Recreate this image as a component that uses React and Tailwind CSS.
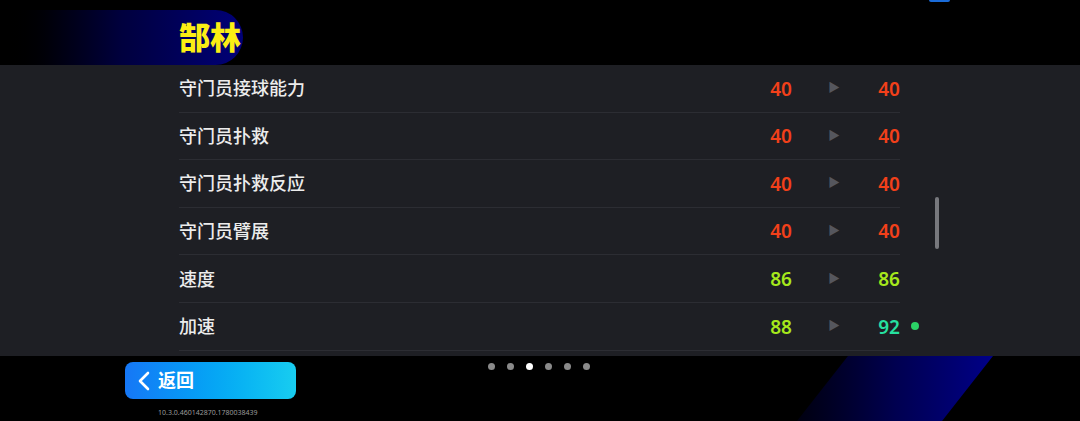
const stats = [
  { name: "守门员接球能力", from: 40, to: 40, tone: "red" },
  { name: "守门员扑救", from: 40, to: 40, tone: "red" },
  { name: "守门员扑救反应", from: 40, to: 40, tone: "red" },
  { name: "守门员臂展", from: 40, to: 40, tone: "red" },
  { name: "速度", from: 86, to: 86, tone: "lime" },
  { name: "加速", from: 88, to: 92, tone: "lime", up: true },
];

const toneClass = {
  red: "text-[#f2401a]",
  lime: "text-[#a6e81c]",
};

const StatRow = ({ stat }) => (
  <div className="relative flex h-[47.6px] items-center border-b border-[#2c2d33]">
    <span className="flex-1 pt-[1px] text-[18px] font-medium text-[#ececec]">{stat.name}</span>
    <span className={`w-[40px] pt-[1px] text-right text-[19px] font-semibold ${toneClass[stat.tone]}`}>
      {stat.from}
    </span>
    <span className="ml-[36px] w-[10px] text-[12px] text-[#55565d]">▶</span>
    <span
      className={`ml-[22px] w-[40px] pt-[1px] text-right text-[19px] font-semibold ${
        stat.up ? "text-[#26e0a0]" : toneClass[stat.tone]
      }`}
    >
      {stat.to}
    </span>
    {stat.up && (
      <span className="absolute left-[732px] top-1/2 h-[8px] w-[8px] -translate-y-1/2 rounded-full bg-[#2bd266]" />
    )}
  </div>
);

export default function App() {
  return (
    <div
      className="relative flex h-[421px] w-[1080px] flex-col overflow-hidden bg-black"
      style={{ fontFamily: '"Noto Sans", "Noto Sans CJK SC", sans-serif' }}
    >
      {/* top bar */}
      <div className="relative h-[65px] shrink-0">
        <div className="mt-[10px] flex h-[55px] w-[243px] items-center rounded-r-[28px] bg-gradient-to-r from-black via-[#00003e] to-[#000078] pl-[179px]">
          <span className="text-[31px] font-black leading-none text-[#fbee14]">郜林</span>
        </div>
        <div className="absolute left-[929px] top-0 h-[2px] w-[21px] rounded-b bg-[#1a6bd8]" />
      </div>

      {/* stats panel */}
      <div className="relative z-10 h-[291px] shrink-0 bg-[#1e1f24]">
        <div className="ml-[179px] w-[721px]">
          {stats.map((s) => (
            <StatRow key={s.name} stat={s} />
          ))}
        </div>
        <div className="absolute left-[935px] top-[132px] h-[52px] w-[4px] rounded-full bg-[#77787d]" />
      </div>

      {/* bottom */}
      <div className="relative z-10 flex flex-1 items-start">
        <div className="ml-[125px] flex flex-col">
          <button className="mt-[6px] flex h-[37px] w-[171px] items-center gap-[8px] rounded-[8px] bg-gradient-to-r from-[#1677f6] to-[#18cdf0] pl-[12px] text-white">
            <svg width="13" height="20" viewBox="0 0 13 20" fill="none">
              <polyline
                points="11,2 3,10 11,18"
                stroke="currentColor"
                strokeWidth="2.6"
                strokeLinecap="round"
                strokeLinejoin="round"
              />
            </svg>
            <span className="text-[18px] font-bold">返回</span>
          </button>
          <span className="ml-[33px] mt-[10px] text-[7px] leading-none text-[#9a9a9a]">
            10.3.0.460142870.1780038439
          </span>
        </div>
        <div className="ml-[192px] mt-[7px] flex gap-[12px]">
          {[0, 1, 2, 3, 4, 5].map((i) => (
            <span
              key={i}
              className={`h-[7px] w-[7px] rounded-full ${i === 2 ? "bg-white" : "bg-[#8a8a8a]"}`}
            />
          ))}
        </div>
      </div>

      {/* decorative stripe */}
      <div className="absolute left-[797px] top-[356px] h-[65px] w-[196px] bg-gradient-to-r from-[#000010] via-[#000050] to-[#000088] [clip-path:polygon(26%_0,100%_0,74%_100%,0_100%)]" />
    </div>
  );
}
